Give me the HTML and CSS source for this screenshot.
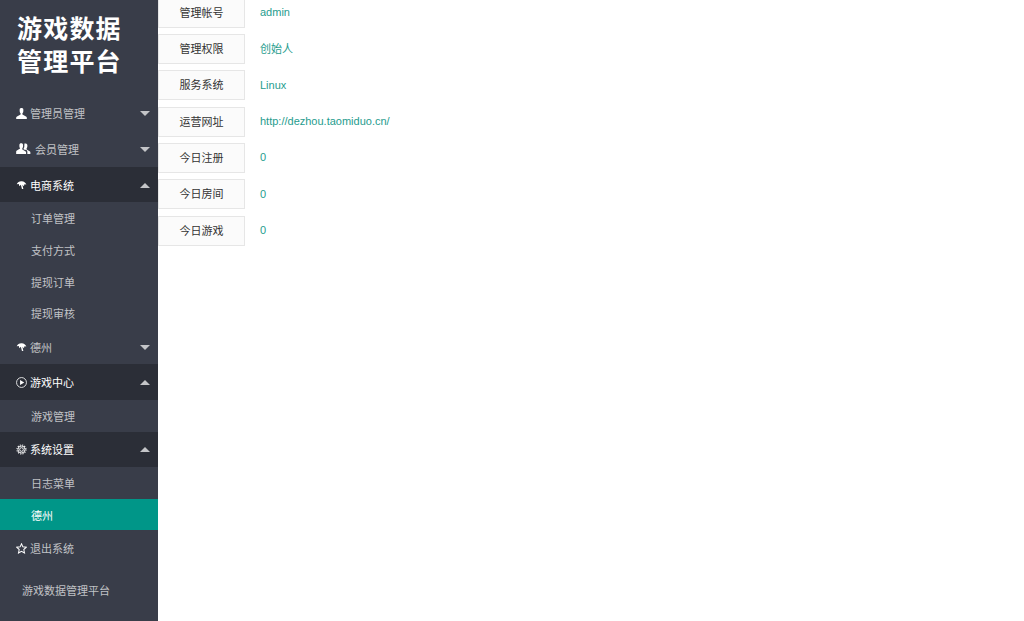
FILE: index.html
```html
<!DOCTYPE html>
<html lang="zh-CN">
  <head>
    <meta charset="UTF-8">
    <title>游戏数据管理平台</title>
    <link rel="stylesheet" href="styles.css">
  </head>
  <body>
    <div class="layout">
      <div class="side">
        <div class="brand">游戏数据<br>管理平台</div>
        <ul class="nav">
          <li class="nav-item">
            <svg class="ico" viewBox="0 0 12 12"><path d="M4 1.600C4 .6 4.900 0 6 0s2 .6 2 1.600v2c0 .9-.5 1.700-1 2.200v1.400l3.900 2.200c.6.300.9.700.9 1.200V12H.2v-1.400c0-.5.300-.9.900-1.200L5 7.200V5.800c-.5-.5-1-1.300-1-2.200z" fill="#fff"/></svg>
            <span>管理员管理</span><i class="caret"></i>
          </li>
          <li class="nav-item">
            <svg class="ico ico-wide" viewBox="0 0 16 12"><path d="M3.500 2.200C3.500 1 4.300.3 5.500.3s2 .7 2 1.900v1.600c0 .8-.4 1.500-.8 2v1.300l3.300 2c.6.300.8.700.8 1.200V12H0V9.300c0-.5.200-.9.800-1.200l3.500-2V5.800c-.4-.5-.8-1.200-.8-2z" fill="#fff"/><path d="M9 .6c1.200-.5 3.200 0 3.200 1.700v1.500c0 .8-.4 1.500-.8 2v1.300l3.300 2c.6.300.8.700.8 1.200V12h-3.300V9.700c0-1-.4-1.500-1.200-2L8.200 7V5.800c.5-.6.700-1.200.7-2V2.200C8.900 1.600 9.200 1 9 .6z" fill="#fff"/></svg>
            <span class="gap-more">会员管理</span><i class="caret"></i>
          </li>
          <li class="nav-item open">
            <svg class="ico" viewBox="0 0 12 12"><path d="M.8 5.600C1.700 3.200 4 2.200 6.300 2.400c2.300.2 4.200 1.400 5 3.600L9.200 5.600 8.600 8 7 6.200 8 11H6.500L5.300 6.400 3.700 7.800 3 5.400z" fill="#fff"/></svg>
            <span>电商系统</span><i class="caret up"></i>
          </li>
          <li class="nav-child">订单管理</li>
          <li class="nav-child">支付方式</li>
          <li class="nav-child">提现订单</li>
          <li class="nav-child">提现审核</li>
          <li class="nav-item">
            <svg class="ico" viewBox="0 0 12 12"><path d="M.8 5.600C1.700 3.200 4 2.200 6.300 2.400c2.300.2 4.200 1.400 5 3.600L9.200 5.600 8.600 8 7 6.200 8 11H6.500L5.300 6.400 3.700 7.800 3 5.400z" fill="#fff"/></svg>
            <span>德州</span><i class="caret"></i>
          </li>
          <li class="nav-item open">
            <svg class="ico" viewBox="0 0 12 12"><circle cx="6" cy="6" r="5.400" fill="none" stroke="#fff" stroke-width=".9"/><path d="M4.400 3.200v5.600L9 6z" fill="#fff"/></svg>
            <span>游戏中心</span><i class="caret up"></i>
          </li>
          <li class="nav-child">游戏管理</li>
          <li class="nav-item open">
            <svg class="ico" viewBox="0 0 12 12"><circle cx="6" cy="6" r="2" fill="none" stroke="#fff" stroke-width="1"/><circle cx="6" cy="6" r="3.800" fill="none" stroke="#fff" stroke-width="1"/><circle cx="6" cy="6" r="4.900" fill="none" stroke="#fff" stroke-width="1.200" stroke-dasharray="1.300 1.270"/></svg>
            <span>系统设置</span><i class="caret up"></i>
          </li>
          <li class="nav-child">日志菜单</li>
          <li class="nav-child this">德州</li>
          <li class="nav-item">
            <svg class="ico" viewBox="0 0 12 12"><path d="M6 .9l1.500 3.300 3.800.4-2.800 2.500.8 3.800L6 9l-3.300 1.900.8-3.800L.7 4.600l3.800-.4z" fill="none" stroke="#fff" stroke-width="1.100"/></svg>
            <span>退出系统</span>
          </li>
        </ul>
        <div class="side-foot">游戏数据管理平台</div>
      </div>

      <div class="main">
        <div class="row"><div class="label">管理帐号</div><div class="value">admin</div></div>
        <div class="row"><div class="label">管理权限</div><div class="value">创始人</div></div>
        <div class="row"><div class="label">服务系统</div><div class="value">Linux</div></div>
        <div class="row"><div class="label">运营网址</div><div class="value">http://dezhou.taomiduo.cn/</div></div>
        <div class="row"><div class="label">今日注册</div><div class="value">0</div></div>
        <div class="row"><div class="label">今日房间</div><div class="value">0</div></div>
        <div class="row"><div class="label">今日游戏</div><div class="value">0</div></div>
      </div>
    </div>
  </body>
</html>
```

FILE: styles.css
```css
*{
    margin: 0;
    padding: 0;
    box-sizing: border-box;
}

html, body{
    height: 100%;
    overflow: hidden;
}

body{
    font-family: "Liberation Sans", "Noto Sans CJK SC", sans-serif;
    font-size: 11px;
    color: #333;
    background: #fff;
}

.layout{
    display: flex;
    height: 100%;
}

.side{
    width: 158px;
    flex-shrink: 0;
    background: #393D49;
    color: rgba(255, 255, 255, 0.7);
}

.brand{
    height: 95.6px;
    padding: 13px 0 0 17px;
    color: #fff;
    font-size: 25px;
    font-weight: 700;
    line-height: 33px;
    letter-spacing: 1.2px;
}

.nav{
    list-style: none;
}

.nav-item{
    display: flex;
    align-items: center;
    height: 35.6px;
    padding: 0 8px 0 16px;
}

.nav-item.open{
    background: #2B2E37;
    color: #fff;
}

.ico{
    width: 11px;
    height: 11px;
    margin-right: 3px;
    flex-shrink: 0;
}

.ico-wide{
    width: 15px;
}

.gap-more{
    margin-left: 1px;
}

.caret{
    margin-left: auto;
    margin-top: 1px;
    width: 0;
    height: 0;
    border-left: 5px solid transparent;
    border-right: 5px solid transparent;
    border-top: 5px solid #c4c5c8;
}

.caret.up{
    border-top: 0;
    border-bottom: 5px solid #c4c5c8;
}

.nav-child{
    height: 31.6px;
    line-height: 31.6px;
    padding: 2px 0 0 31px;
}

.nav-child.this{
    background: #009688;
    color: #fff;
}

.side-foot{
    padding: 16px 0 0 22px;
}

.main{
    flex: 1;
    margin-top: -2.300px;
}

.row{
    display: flex;
    align-items: center;
    margin-bottom: 6.350px;
}

.label{
    width: 87px;
    height: 30px;
    line-height: 28px;
    text-align: center;
    background: #FBFBFB;
    border: 1px solid #e6e6e6;
}

.value{
    padding: 0 0 1.500px 15px;
    color: #1f9c8e;
}
```
